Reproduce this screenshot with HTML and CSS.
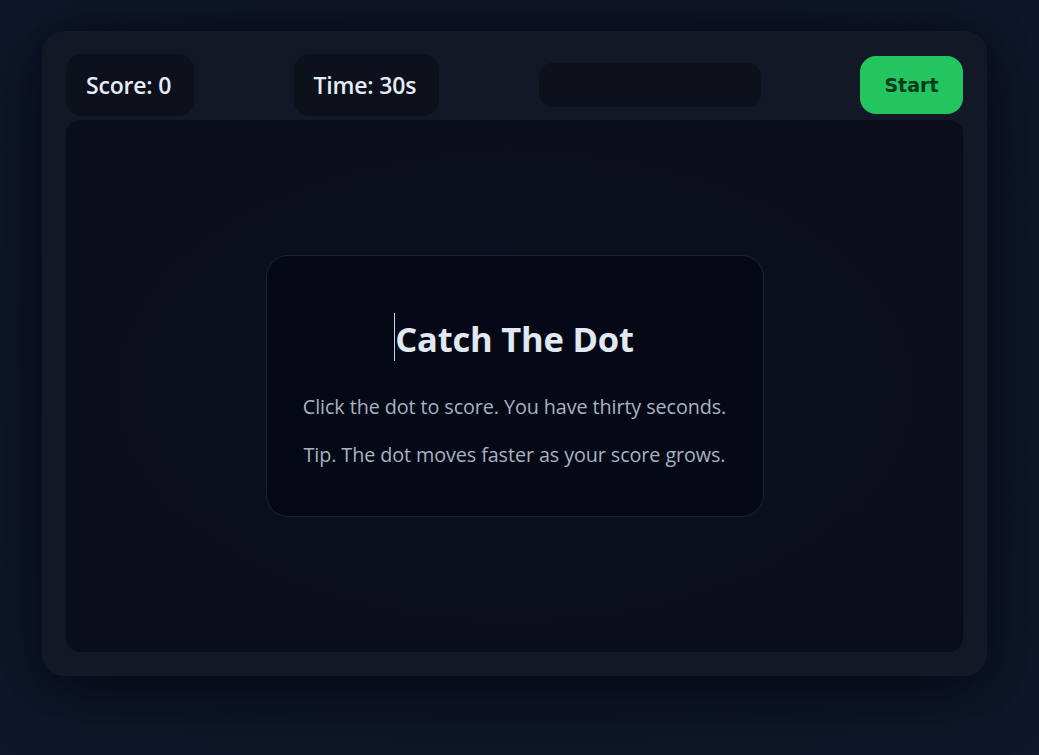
FILE: index.html
```html
<!DOCTYPE html>
<html lang="en">
<head>
<meta charset="utf-8">
<title>Catch The Dot</title>
<link rel="stylesheet" href="styles.css">
</head>
<body>
<main class="app">
  <header class="hud">
    <div class="pill stat">Score: 0</div>
    <div class="pill stat">Time: 30s</div>
    <div class="pill empty"></div>
    <button class="start">Start</button>
  </header>
  <section class="arena">
    <div class="intro">
      <h1 class="title"><span class="caret"></span>Catch The Dot</h1>
      <p class="line first">Click the dot to score. You have thirty seconds.</p>
      <p class="line">Tip. The dot moves faster as your score grows.</p>
    </div>
  </section>
</main>
</body>
</html>
```

FILE: styles.css
```css
html, body {
  margin: 0;
  padding: 0;
}
body {
  width: 1039px;
  height: 755px;
  overflow: hidden;
  background: radial-gradient(ellipse at 50% 45%, #0c1222 0%, #0e1526 60%, #0f182c 100%);
  font-family: "Open Sans", "Noto Sans", sans-serif;
  padding: 31px 0 0 42px;
  box-sizing: border-box;
}
.app {
  width: 945px;
  height: 645px;
  box-sizing: border-box;
  background: #121826;
  border-radius: 22px;
  padding: 23px 24px 24px 24px;
  display: flex;
  flex-direction: column;
  gap: 4px;
  box-shadow: 0 20px 60px rgba(3, 6, 14, 0.55), 0 0 40px rgba(3, 6, 14, 0.35);
}
.hud {
  display: flex;
  justify-content: space-between;
  align-items: center;
  height: 62px;
}
.pill {
  background: #0c111c;
  border-radius: 16px;
  box-sizing: border-box;
}
.stat {
  height: 62px;
  display: flex;
  align-items: center;
  padding: 0 23px 0 20px;
  color: #e6edf8;
  font-size: 23px;
  font-weight: 600;
  letter-spacing: -0.2px;
}
.empty {
  width: 222px;
  height: 44px;
  border-radius: 14px;
}
.start {
  width: 103px;
  height: 58px;
  border: none;
  border-radius: 16px;
  background: #22c55e;
  color: #073a1b;
  font-family: "DejaVu Sans", sans-serif;
  font-weight: 700;
  font-size: 19px;
  padding: 0;
  cursor: pointer;
}
.arena {
  flex: 1;
  border-radius: 14px;
  background: radial-gradient(ellipse at 50% 50%, #0a1020 0%, #0a0f1b 60%, #0a0e1a 100%);
  display: flex;
  align-items: center;
  justify-content: center;
}
.intro {
  width: 498px;
  height: 262px;
  box-sizing: border-box;
  background: #050915;
  border: 1px solid #1c2333;
  border-radius: 22px;
  display: flex;
  flex-direction: column;
  align-items: center;
  padding-top: 59px;
}
.title {
  margin: 0;
  font-size: 34.5px;
  font-weight: 700;
  color: #e2e8f2;
  line-height: 48px;
  position: relative;
  letter-spacing: -0.2px;
}
.caret {
  position: absolute;
  left: -1px;
  top: -2px;
  width: 1px;
  height: 48px;
  background: #cbd5e1;
}
.line {
  margin: 20px 0 0 0;
  font-size: 19.8px;
  color: #a9b2c2;
  line-height: 28px;
  letter-spacing: -0.1px;
}
.line.first {
  margin-top: 30px;
}
```
